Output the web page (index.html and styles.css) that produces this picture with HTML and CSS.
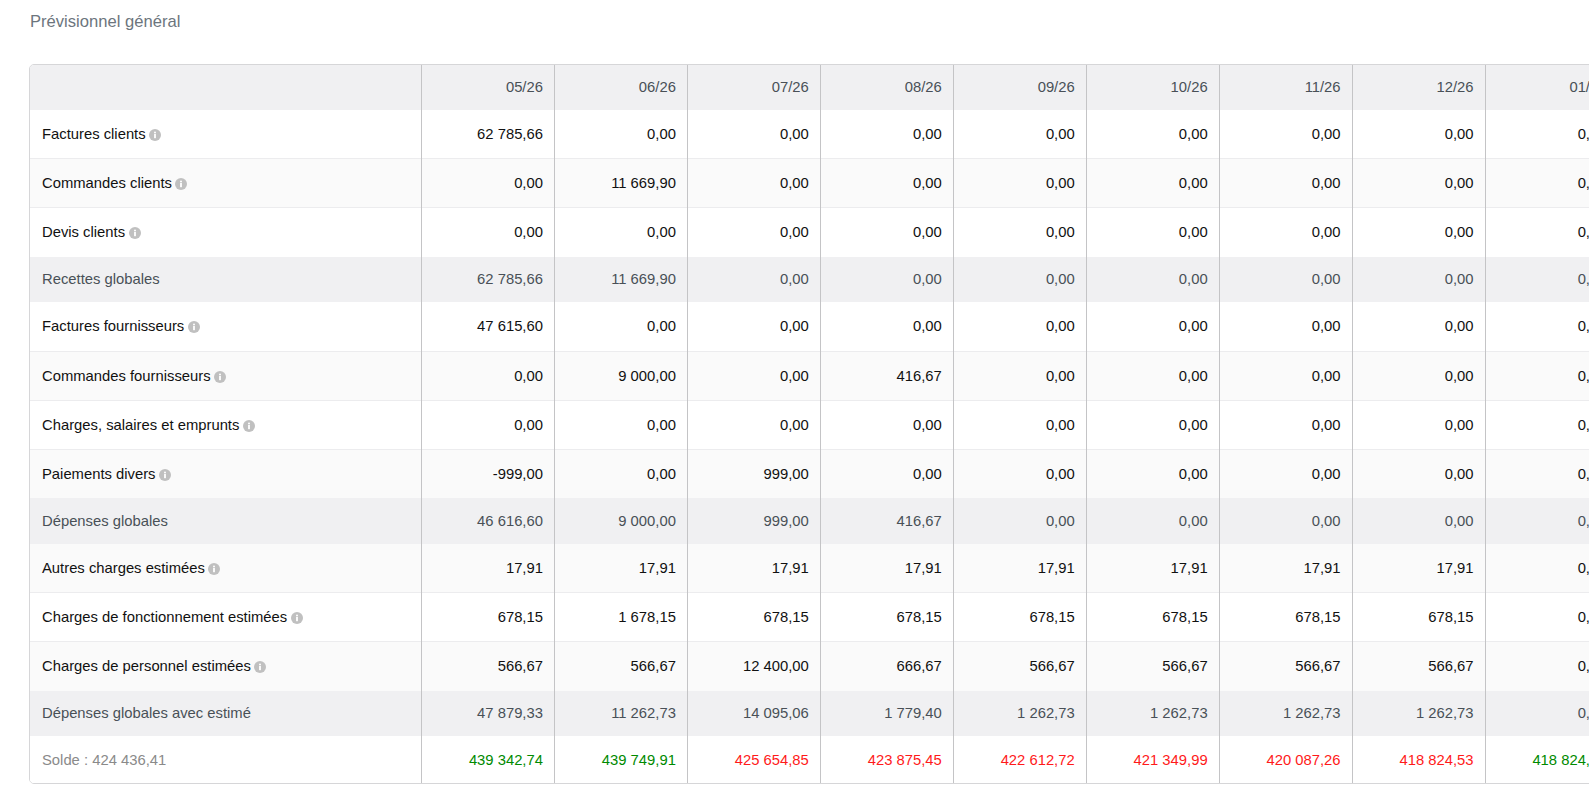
FILE: index.html
```html
<!DOCTYPE html>
<html lang="fr">
<head>
<meta charset="utf-8">
<title>Prévisionnel général</title>
<link rel="stylesheet" href="styles.css">
</head>
<body>
<h1 class="page-title">Prévisionnel général</h1>
<div class="table-wrap">
<table class="forecast">
<thead>
<tr class="head-row">
<th class="label-head"></th><th class="month">05/26</th><th class="month">06/26</th><th class="month">07/26</th><th class="month">08/26</th><th class="month">09/26</th><th class="month">10/26</th><th class="month">11/26</th><th class="month">12/26</th><th class="month">01/27</th><th class="month">02/27</th><th class="month">03/27</th><th class="month">04/27</th>
</tr>
</thead>
<tbody>
<tr class="row">
<td>Factures clients<svg class="info" viewBox="0 0 12 12"><circle cx="6" cy="6" r="6"/><rect x="5.1" y="5" width="1.8" height="4.2"/><circle class="dot" cx="6" cy="3.4" r="1"/></svg></td>
<td>62 785,66</td><td>0,00</td><td>0,00</td><td>0,00</td><td>0,00</td><td>0,00</td><td>0,00</td><td>0,00</td><td>0,00</td><td>0,00</td><td>0,00</td><td>0,00</td>
</tr>
<tr class="row">
<td>Commandes clients<svg class="info" viewBox="0 0 12 12"><circle cx="6" cy="6" r="6"/><rect x="5.1" y="5" width="1.8" height="4.2"/><circle class="dot" cx="6" cy="3.4" r="1"/></svg></td>
<td>0,00</td><td>11 669,90</td><td>0,00</td><td>0,00</td><td>0,00</td><td>0,00</td><td>0,00</td><td>0,00</td><td>0,00</td><td>0,00</td><td>0,00</td><td>0,00</td>
</tr>
<tr class="row">
<td>Devis clients<svg class="info" viewBox="0 0 12 12"><circle cx="6" cy="6" r="6"/><rect x="5.1" y="5" width="1.8" height="4.2"/><circle class="dot" cx="6" cy="3.4" r="1"/></svg></td>
<td>0,00</td><td>0,00</td><td>0,00</td><td>0,00</td><td>0,00</td><td>0,00</td><td>0,00</td><td>0,00</td><td>0,00</td><td>0,00</td><td>0,00</td><td>0,00</td>
</tr>
<tr class="row total">
<td>Recettes globales</td>
<td>62 785,66</td><td>11 669,90</td><td>0,00</td><td>0,00</td><td>0,00</td><td>0,00</td><td>0,00</td><td>0,00</td><td>0,00</td><td>0,00</td><td>0,00</td><td>0,00</td>
</tr>
<tr class="row">
<td>Factures fournisseurs<svg class="info" viewBox="0 0 12 12"><circle cx="6" cy="6" r="6"/><rect x="5.1" y="5" width="1.8" height="4.2"/><circle class="dot" cx="6" cy="3.4" r="1"/></svg></td>
<td>47 615,60</td><td>0,00</td><td>0,00</td><td>0,00</td><td>0,00</td><td>0,00</td><td>0,00</td><td>0,00</td><td>0,00</td><td>0,00</td><td>0,00</td><td>0,00</td>
</tr>
<tr class="row">
<td>Commandes fournisseurs<svg class="info" viewBox="0 0 12 12"><circle cx="6" cy="6" r="6"/><rect x="5.1" y="5" width="1.8" height="4.2"/><circle class="dot" cx="6" cy="3.4" r="1"/></svg></td>
<td>0,00</td><td>9 000,00</td><td>0,00</td><td>416,67</td><td>0,00</td><td>0,00</td><td>0,00</td><td>0,00</td><td>0,00</td><td>0,00</td><td>0,00</td><td>0,00</td>
</tr>
<tr class="row">
<td>Charges, salaires et emprunts<svg class="info" viewBox="0 0 12 12"><circle cx="6" cy="6" r="6"/><rect x="5.1" y="5" width="1.8" height="4.2"/><circle class="dot" cx="6" cy="3.4" r="1"/></svg></td>
<td>0,00</td><td>0,00</td><td>0,00</td><td>0,00</td><td>0,00</td><td>0,00</td><td>0,00</td><td>0,00</td><td>0,00</td><td>0,00</td><td>0,00</td><td>0,00</td>
</tr>
<tr class="row">
<td>Paiements divers<svg class="info" viewBox="0 0 12 12"><circle cx="6" cy="6" r="6"/><rect x="5.1" y="5" width="1.8" height="4.2"/><circle class="dot" cx="6" cy="3.4" r="1"/></svg></td>
<td>-999,00</td><td>0,00</td><td>999,00</td><td>0,00</td><td>0,00</td><td>0,00</td><td>0,00</td><td>0,00</td><td>0,00</td><td>0,00</td><td>0,00</td><td>0,00</td>
</tr>
<tr class="row total">
<td>Dépenses globales</td>
<td>46 616,60</td><td>9 000,00</td><td>999,00</td><td>416,67</td><td>0,00</td><td>0,00</td><td>0,00</td><td>0,00</td><td>0,00</td><td>0,00</td><td>0,00</td><td>0,00</td>
</tr>
<tr class="row">
<td>Autres charges estimées<svg class="info" viewBox="0 0 12 12"><circle cx="6" cy="6" r="6"/><rect x="5.1" y="5" width="1.8" height="4.2"/><circle class="dot" cx="6" cy="3.4" r="1"/></svg></td>
<td>17,91</td><td>17,91</td><td>17,91</td><td>17,91</td><td>17,91</td><td>17,91</td><td>17,91</td><td>17,91</td><td>0,00</td><td>0,00</td><td>0,00</td><td>0,00</td>
</tr>
<tr class="row">
<td>Charges de fonctionnement estimées<svg class="info" viewBox="0 0 12 12"><circle cx="6" cy="6" r="6"/><rect x="5.1" y="5" width="1.8" height="4.2"/><circle class="dot" cx="6" cy="3.4" r="1"/></svg></td>
<td>678,15</td><td>1 678,15</td><td>678,15</td><td>678,15</td><td>678,15</td><td>678,15</td><td>678,15</td><td>678,15</td><td>0,00</td><td>0,00</td><td>0,00</td><td>0,00</td>
</tr>
<tr class="row">
<td>Charges de personnel estimées<svg class="info" viewBox="0 0 12 12"><circle cx="6" cy="6" r="6"/><rect x="5.1" y="5" width="1.8" height="4.2"/><circle class="dot" cx="6" cy="3.4" r="1"/></svg></td>
<td>566,67</td><td>566,67</td><td>12 400,00</td><td>666,67</td><td>566,67</td><td>566,67</td><td>566,67</td><td>566,67</td><td>0,00</td><td>0,00</td><td>0,00</td><td>0,00</td>
</tr>
<tr class="row total">
<td>Dépenses globales avec estimé</td>
<td>47 879,33</td><td>11 262,73</td><td>14 095,06</td><td>1 779,40</td><td>1 262,73</td><td>1 262,73</td><td>1 262,73</td><td>1 262,73</td><td>0,00</td><td>0,00</td><td>0,00</td><td>0,00</td>
</tr>
<tr class="row balance">
<td class="balance-label">Solde : 424 436,41</td>
<td class="up">439 342,74</td><td class="up">439 749,91</td><td class="down">425 654,85</td><td class="down">423 875,45</td><td class="down">422 612,72</td><td class="down">421 349,99</td><td class="down">420 087,26</td><td class="down">418 824,53</td><td class="up">418 824,53</td><td class="up">418 824,53</td><td class="up">418 824,53</td><td class="up">418 824,53</td>
</tr>
</tbody>
</table>
</div>
</body>
</html>
```

FILE: styles.css
```css
html, body {
  margin: 0;
  padding: 0;
  overflow: hidden;
  background: #ffffff;
  font-family: "Liberation Sans", Arial, sans-serif;
  font-size: 14.8px;
  color: #111111;
}

.page-title {
  margin: 12px 0 0 30px;
  font-size: 16.6px;
  line-height: 20px;
  font-weight: normal;
  color: #6c757d;
}

.table-wrap {
  width: max-content;
  margin: 32px 0 0 29px;
  border: 1px solid #d6d6d8;
  border-radius: 5px;
  overflow: hidden;
}

.forecast {
  border-collapse: collapse;
}

.forecast th,
.forecast td {
  padding: 0 11px 0 12px;
  line-height: 20px;
  white-space: nowrap;
  text-align: right;
  vertical-align: middle;
}

.forecast .label-head { width: 368px; }
.forecast .month { width: 108.95px; }

.forecast th:first-child,
.forecast td:first-child {
  text-align: left;
}

.forecast th + th,
.forecast td + td {
  border-left: 1px solid #c4c4c6;
}

.head-row {
  height: 44.5px;
  background: #f0f0f2;
}

.head-row th {
  font-weight: normal;
  color: #495057;
}

.row {
  height: 49px;
  background: #ffffff;
  border-top: 1px solid #ececee;
}

.row:nth-child(even) {
  background: #fafafa;
}

.row:first-child {
  border-top: none;
}

.row.total {
  height: 45.5px;
  background: #f0f0f2;
  border-top: none;
  color: #495057;
}

.row.total + .row {
  border-top: none;
}

.row.balance {
  height: 47px;
  background: #ffffff;
}

.balance-label {
  color: #8a8a8a;
}

.up { color: #008a00; }
.down { color: #ff1a1a; }

.info {
  width: 12px;
  height: 12px;
  margin-left: 3.5px;
  vertical-align: -2px;
  fill: #c0c0c0;
}

.info rect,
.info .dot {
  fill: #ffffff;
}
```
